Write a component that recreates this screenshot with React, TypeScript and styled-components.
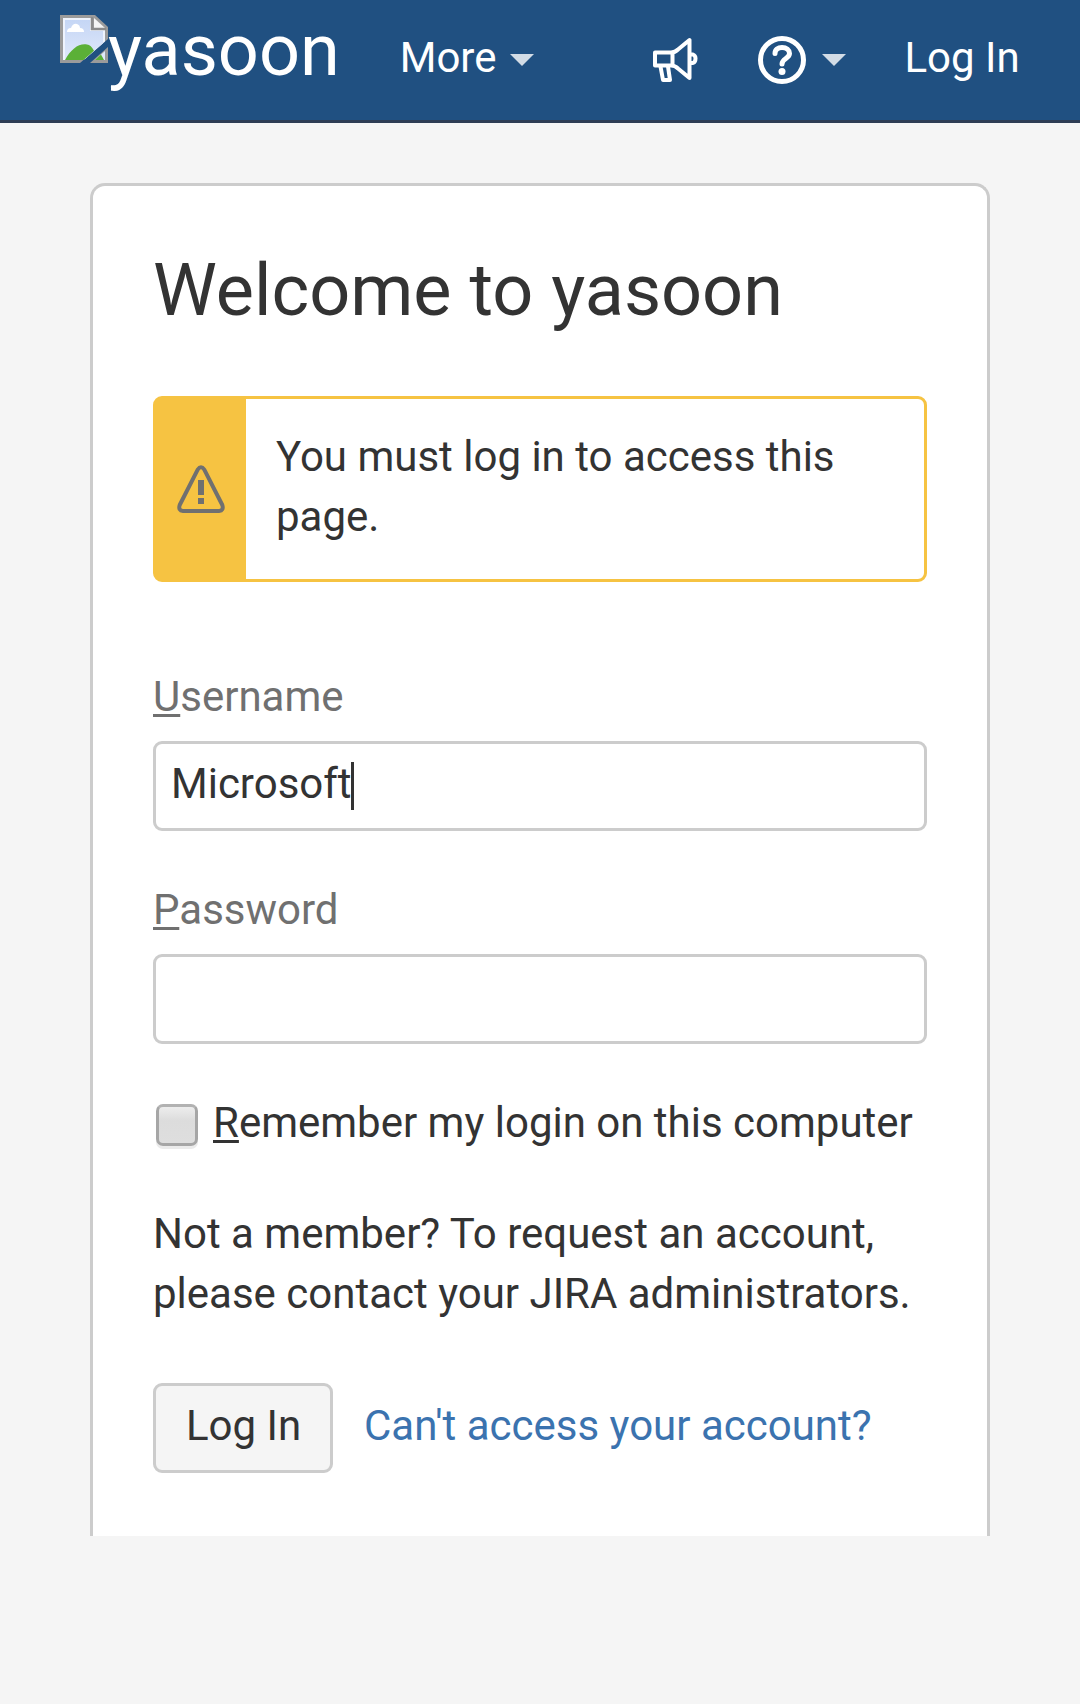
import React from "react";
import styled, { createGlobalStyle } from "styled-components";

const GlobalStyle = createGlobalStyle`
  *, *::before, *::after { box-sizing: border-box; }
  body {
    margin: 0;
    background: #f5f5f5;
    color: #333;
    font: 42px/60px Roboto, "Liberation Sans", sans-serif;
  }
  a { text-decoration: none; }
`;

const Page = styled.div`
  min-height: 1704px;
  background: #f5f5f5;
`;

const Header = styled.header`
  display: flex;
  align-items: flex-start;
  height: 123px;
  padding: 0 60px;
  background: #205081;
  border-bottom: 3px solid #2e3d54;
`;

const Logo = styled.a`
  display: flex;
  align-items: flex-start;
  padding-top: 15px;
  color: #fff;
  font-size: 72px;
  line-height: 72px;
  svg { display: block; width: 48px; height: 48px; flex: none; }
`;

const LogoText = styled.span`
  display: block;
`;

const NavItem = styled.a<{ $left: number }>`
  display: flex;
  align-items: center;
  height: 120px;
  margin-left: ${(p) => p.$left}px;
  color: #fff;
  white-space: nowrap;
  svg { display: block; flex: none; }
`;

const NavText = styled.span`
  display: block;
  padding-bottom: 5px;
`;

const Caret = styled.span<{ $gap: number }>`
  width: 0;
  height: 0;
  margin-left: ${(p) => p.$gap}px;
  border: 12px solid transparent;
  border-top-color: #d2dce6;
  border-bottom: 0;
`;

const Card = styled.main`
  width: 900px;
  height: 1353px;
  margin: 60px auto 0;
  padding: 60px;
  background: #fff;
  border: 3px solid #ccc;
  border-bottom: 0;
  border-radius: 15px 15px 0 0;
`;

const Title = styled.h1`
  margin: 0;
  font-size: 72px;
  font-weight: 400;
  line-height: 90px;
`;

const Alert = styled.div`
  display: flex;
  height: 186px;
  margin-top: 60px;
  border: 3px solid #f6c342;
  border-radius: 9px;
`;

const AlertIcon = styled.div`
  display: flex;
  align-items: center;
  justify-content: center;
  width: 90px;
  flex: none;
  background: #f6c342;
`;

const AlertText = styled.p`
  margin: 0;
  padding: 28px 30px;
`;

const Field = styled.div<{ $top: number }>`
  margin-top: ${(p) => p.$top}px;
`;

const Label = styled.label`
  display: block;
  height: 75px;
  padding-top: 1px;
  color: #707070;
`;

const Key = styled.span`
  text-decoration: underline;
  text-decoration-thickness: 3px;
  text-underline-offset: 3px;
  text-decoration-skip-ink: none;
`;

const Input = styled.div`
  display: flex;
  align-items: center;
  height: 90px;
  padding: 0 15px 5px;
  background: #fff;
  border: 3px solid #ccc;
  border-radius: 9px;
`;

const TextCursor = styled.span`
  width: 3px;
  height: 48px;
  margin: 5px 0 0 -1px;
  background: #333;
`;

const Remember = styled.label`
  display: flex;
  align-items: flex-start;
  margin-top: 49px;
  padding-left: 3px;
  white-space: nowrap;
`;

const Checkbox = styled.span`
  width: 42px;
  height: 42px;
  flex: none;
  margin: 11px 15px 0 0;
  border: 3px solid #a6a6a6;
  border-top-color: #b2b2b2;
  border-radius: 7px;
  background: linear-gradient(#ededed, #dcdcdc 38%, #dedede);
  box-shadow: 0 3px 0 #ebebeb;
`;

const Note = styled.p`
  margin: 51px 0 0;
`;

const Actions = styled.div`
  display: flex;
  align-items: center;
  margin-top: 59px;
`;

const Button = styled.button`
  width: 180px;
  height: 90px;
  padding: 0 0 5px 1px;
  color: #333;
  font: inherit;
  background: #f5f5f5;
  border: 3px solid #ccc;
  border-radius: 9px;
`;

const TextLink = styled.a`
  margin-left: 31px;
  padding-bottom: 5px;
  color: #3b73af;
`;

const BrokenImage = () => (
  <svg viewBox="0 0 48 48">
    <defs>
      <linearGradient id="sky" x1="0" y1="0" x2="0" y2="1">
        <stop offset="0" stopColor="#c5d6f5" />
        <stop offset="1" stopColor="#dfe8fa" />
      </linearGradient>
    </defs>
    <path d="M0 0H35L48 12V24L20 48H0Z" fill="#9b9b9b" />
    <path d="M3 3H31V15H45V26.500L23.500 45H3Z" fill="#eef3fd" />
    <path d="M5 5H30V16H43V28.200L25 44H5Z" fill="url(#sky)" />
    <path d="M34 3L45 13H34Z" fill="#f5f5f5" />
    <path d="M32 2V14H46" fill="none" stroke="#8b8b8b" strokeWidth="2.5" />
    <path d="M7 17Q7 13 11 13Q13 8 17 9Q20 10 20 13Q24 13 24 17Z" fill="#fff" />
    <path d="M5 45C11 34 19 28 27 29.500Q31 30 34 35.800L23.500 45Z" fill="#5bb037" />
    <path d="M48 32V48H30Z" fill="#9b9b9b" />
    <path d="M45 36V45H35Z" fill="#dfe8fa" />
    <path d="M35 45L41 39.500L44 45Z" fill="#5bb037" />
  </svg>
);

const Megaphone = () => (
  <svg width="46" height="46" viewBox="0 0 46 46" fill="none" stroke="#fff" strokeWidth="4" strokeLinejoin="round">
    <path d="M3 15.500H19Q23 15.500 26 12.500L37.500 3V41L26 31.500Q23 28.500 19 28.500H3Z" />
    <path d="M20.500 15.500V28.500M8.500 29.500L11 43H18L16 29.500" />
    <path d="M38.500 17.500H41Q43.500 18.500 43.500 21.500Q43.500 25 41 26H38.500" />
  </svg>
);

const Help = () => (
  <svg width="48" height="48" viewBox="0 0 48 48" fill="none" stroke="#fff">
    <circle cx="24" cy="24" r="21.500" strokeWidth="5" />
    <path d="M17 17.500C17 13.500 20 11.500 24 11.500C28.500 11.500 31.500 14 31.500 17.500C31.500 22.500 24 22.500 24 28" strokeWidth="5" strokeLinecap="round" />
    <circle cx="24" cy="35.500" r="3.500" fill="#fff" stroke="none" />
  </svg>
);

const Warning = () => (
  <svg width="48" height="48" viewBox="0 0 48 48">
    <path d="M20.700 4.600Q24 0 27.300 4.600L45.300 40Q47 45.500 42 46H6Q1 45.500 2.700 40Z" fill="none" stroke="#707070" strokeWidth="4" strokeLinejoin="round" />
    <path d="M21 15H27V30H21ZM21 33H27V39H21Z" fill="#707070" />
  </svg>
);

export default function App() {
  return (
    <Page>
      <GlobalStyle />
      <Header>
        <Logo>
          <BrokenImage />
          <LogoText>yasoon</LogoText>
        </Logo>
        <NavItem $left={60}>
          <NavText>More</NavText>
          <Caret $gap={13} />
        </NavItem>
        <NavItem $left={118}>
          <Megaphone />
        </NavItem>
        <NavItem $left={60}>
          <Help />
          <Caret $gap={16} />
        </NavItem>
        <NavItem $left={59}>
          <NavText>Log In</NavText>
        </NavItem>
      </Header>
      <Card>
        <Title>Welcome to yasoon</Title>
        <Alert>
          <AlertIcon>
            <Warning />
          </AlertIcon>
          <AlertText>You must log in to access this page.</AlertText>
        </Alert>
        <Field $top={84}>
          <Label><Key>U</Key>sername</Label>
          <Input>Microsoft<TextCursor /></Input>
        </Field>
        <Field $top={48}>
          <Label><Key>P</Key>assword</Label>
          <Input />
        </Field>
        <Remember>
          <Checkbox />
          <span><Key>R</Key>emember my login on this computer</span>
        </Remember>
        <Note>Not a member? To request an account, please contact your JIRA administrators.</Note>
        <Actions>
          <Button>Log In</Button>
          <TextLink>Can't access your account?</TextLink>
        </Actions>
      </Card>
    </Page>
  );
}
